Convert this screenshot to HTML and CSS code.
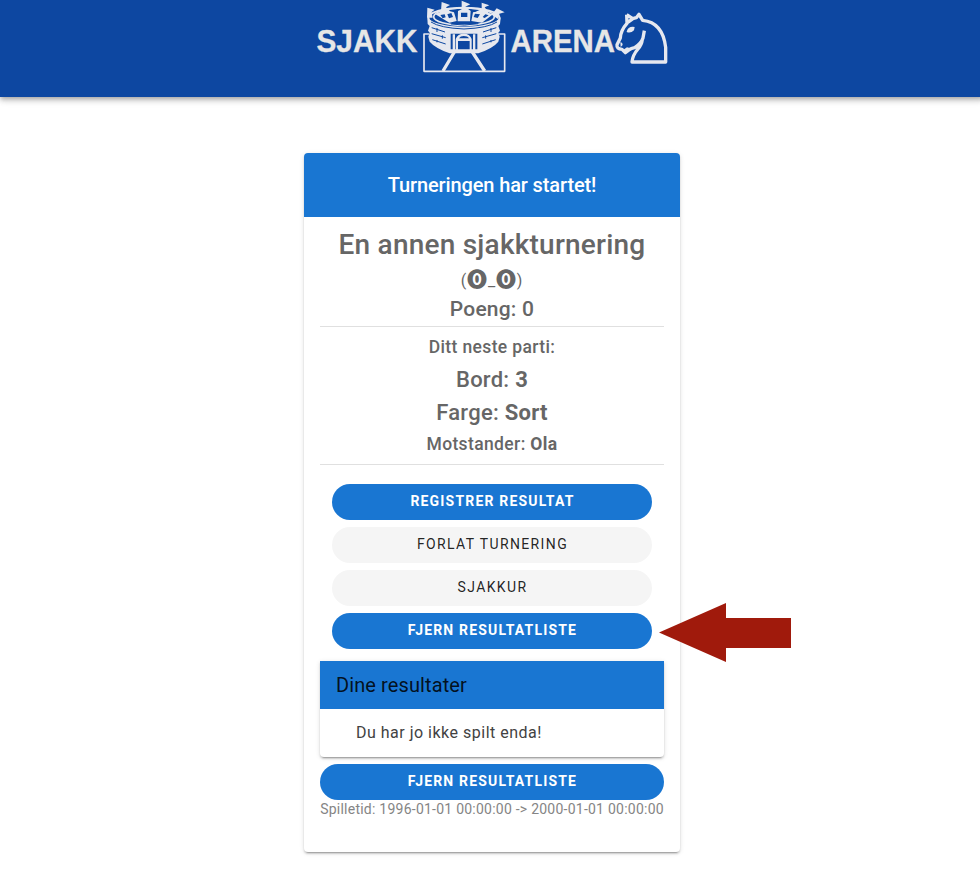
FILE: index.html
```html
<!DOCTYPE html>
<html lang="no">
<head>
<meta charset="utf-8">
<title>Sjakkarena</title>
<link rel="stylesheet" href="styles.css">
</head>
<body>
<header class="app-bar">
  <svg class="logo" viewBox="316 0 352 76" role="img" aria-label="Sjakkarena">
    <g class="logo-text">
      <text x="316.5" y="52.300" textLength="101" lengthAdjust="spacingAndGlyphs">SJAKK</text>
      <text x="510.5" y="52.300" textLength="104.500" lengthAdjust="spacingAndGlyphs">ARENA</text>
    </g>
    <g class="logo-line" transform="translate(415 0) scale(.33333)">
      <path stroke-width="5" d="M42 102H27V214H269V102H250"/>
      <path stroke-width="10" d="M118 156L84 213M172 156L209 213"/>
      <path class="logo-fill" d="M37 54Q75 84 147 84Q219 84 257 54L255 72L250 78L255 92L250 98L254 110L250 125Q235 144 190 160H104Q60 144 44 125L40 110L44 98L39 92L44 78L38 72z"/>
      <ellipse cx="147" cy="53" rx="107" ry="30" stroke-width="6" fill="#0d47a1"/>
      <ellipse cx="147" cy="50" rx="91" ry="26" stroke-width="5"/>
      <path class="logo-fill" d="M37 23L59 29L50 36L53 53H36zM80 6L105 15L93 22L107 35L77 45zM140 2L166 13L151 20L167 33L165 64H128L129 33L140 28zM200 8L223 16L209 22L220 37L195 61L179 37L200 27zM245 25L269 37L253 41L250 58L230 44zM60 42L91 30L117 37L125 63L103 68zM174 37L202 32L234 43L201 68L169 63z"/>
      <path class="logo-hole" d="M138 38H157V51H138zM97 43L109 39L114 51L102 55zM180 41L195 43L188 54L176 51zM76 45L89 43L92 52L83 55zM211 43L221 46L209 54L203 51z"/>
      <path stroke="#0d47a1" stroke-width="3" d="M48 66Q75 84 147 87Q219 84 246 66M108 72Q147 79 190 71M50 83L90 96M50 101L92 113M52 119L92 132M244 83L204 96M244 101L202 113M242 119L202 132M66 84V96M82 106V116M66 120V127M228 84V96M212 106V116M228 120V127"/>
      <path class="logo-hole" d="M107 101H187V148H168V123Q168 103 146 103Q125 103 125 123V148H107z"/>
      <path class="logo-fill" d="M113 103H120V151H113zM174 103H181V151H174zM122 117Q128 101 147 101Q164 101 170 117V157H122z"/>
      <path class="logo-hole" d="M129 123H164V148H129zM132 115Q136 108 146 108Q158 108 162 115z"/>
    </g>
    <g class="logo-line" transform="translate(610 5) scale(.33333)">
      <path stroke-width="10" d="M50 29L51 55Q32 76 31 99L21 119Q19 132 36 133L46 143L58 134Q63 130 74 128Q94 115 99 99L103 77M50 29L68 41L79 38L87 28L98 46Q158 52 167 127V171H66Q68 150 84 132Q95 120 97 104M52 53L70 40"/>
      <path class="logo-fill" d="M50 80Q54 63 74 66L72 76Q62 86 50 81zM31 112Q38 111 38 120L32 126zM51 127L62 130L47 143L39 135z"/>
    </g>
  </svg>
</header>
<main class="page">
  <section class="card">
    <h1 class="card-title">Turneringen har startet!</h1>
    <div class="card-body">
      <div class="summary">
        <h2 class="name">En annen sjakkturnering</h2>
        <p class="face">(<span class="eye">⓿</span>_<span class="eye">⓿</span>)</p>
        <p class="points">Poeng: 0</p>
      </div>
      <div class="next">
        <p class="small">Ditt neste parti:</p>
        <p class="large">Bord: <b>3</b></p>
        <p class="large">Farge: <b>Sort</b></p>
        <p class="small">Motstander: <b>Ola</b></p>
      </div>
      <div class="actions">
        <div class="action-row">
          <button class="btn primary">Registrer resultat</button>
        </div>
        <button class="btn">Forlat turnering</button>
        <button class="btn">Sjakkur</button>
        <div class="action-row">
          <button class="btn primary">Fjern resultatliste</button>
          <svg class="arrow" viewBox="0 0 134 62" aria-hidden="true"><path d="M1 30.500L68 1V16H133V46H68V60Z"/></svg>
        </div>
      </div>
      <section class="results">
        <h3 class="results-title">Dine resultater</h3>
        <p class="results-empty">Du har jo ikke spilt enda!</p>
      </section>
      <button class="btn primary">Fjern resultatliste</button>
      <p class="time">Spilletid: 1996-01-01 00:00:00 -&gt; 2000-01-01 00:00:00</p>
    </div>
  </section>
</main>
</body>
</html>
```
FILE: styles.css
```css
* { box-sizing: border-box; }
html { overflow: hidden; }
body {
  margin: 0;
  width: 984px;
  background: #fff;
  color: #666;
  font-family: Roboto, "Liberation Sans", sans-serif;
}
h1, h2, h3, p { margin: 0; }
.app-bar {
  display: flex;
  justify-content: center;
  height: 97px;
  background: #0d47a1;
  box-shadow: 0 2px 4px -1px rgba(0,0,0,.2), 0 4px 5px rgba(0,0,0,.14), 0 1px 10px rgba(0,0,0,.12);
}
.logo { width: 352px; height: 76px; }
.logo-text {
  fill: #e6e6e6;
  stroke: #e6e6e6;
  stroke-width: .3px;
  font: bold 31px "Liberation Sans", Arial, sans-serif;
}
.logo-line { fill: none; stroke: #e6e8ef; stroke-linejoin: round; }
.logo-fill { fill: #e6e8ef; stroke: none; }
.logo-hole { fill: #0d47a1; stroke: none; }
.page { display: flex; justify-content: center; padding: 56px 0 28px; }
.card {
  width: 376px;
  height: 699px;
  border-radius: 4px;
  background: #fff;
  box-shadow: 0 3px 1px -2px rgba(0,0,0,.2), 0 2px 2px rgba(0,0,0,.14), 0 1px 5px rgba(0,0,0,.12);
}
.card-title {
  height: 64px;
  border-radius: 4px 4px 0 0;
  background: #1976d2;
  color: #fff;
  font-size: 20px;
  font-weight: 500;
  line-height: 64px;
  letter-spacing: -.12px;
  text-align: center;
}
.card-body { padding: 0 16px; text-align: center; }
.summary { height: 110px; padding-top: 10px; border-bottom: 1px solid #e0e0e0; }
.name { font-size: 28px; font-weight: 500; line-height: 36px; letter-spacing: .22px; white-space: nowrap; }
.face { font-size: 16px; line-height: 36px; height: 32px; letter-spacing: .85px; }
.eye {
  font-family: "DejaVu Sans", "Noto Sans CJK JP", sans-serif;
  font-size: 20px;
  font-weight: 700;
  line-height: 1;
  vertical-align: -1px;
}
.points { font-size: 21px; font-weight: 500; line-height: 28px; letter-spacing: .2px; }
.next { height: 138px; padding-top: 4px; border-bottom: 1px solid #e0e0e0; }
.small { font-size: 17.500px; font-weight: 500; line-height: 32px; letter-spacing: .37px; }
.large { font-size: 22px; font-weight: 500; line-height: 33px; letter-spacing: .25px; }
.large + .small { line-height: 30px; }
.actions { display: flex; flex-direction: column; gap: 7px; padding: 19px 12px 12px; }
.action-row { position: relative; }
.btn {
  display: block;
  width: 100%;
  height: 36px;
  padding: 0 0 2px 1px;
  border: 0;
  border-radius: 18px;
  background: #f5f5f5;
  color: rgba(0,0,0,.87);
  font: 400 14px/34px Roboto, "Liberation Sans", sans-serif;
  letter-spacing: 1.370px;
  text-transform: uppercase;
}
.primary { background: #1976d2; color: #fff; font-weight: 700; letter-spacing: 1.180px; }
.arrow { position: absolute; left: 326px; top: -11px; width: 134px; height: 62px; fill: #a01a0c; }
.results {
  height: 96px;
  margin-bottom: 7px;
  border-radius: 0 0 4px 4px;
  text-align: left;
  box-shadow: 0 3px 1px -2px rgba(0,0,0,.2), 0 2px 2px rgba(0,0,0,.14), 0 1px 5px rgba(0,0,0,.12);
}
.results-title {
  height: 48px;
  padding-left: 16px;
  background: #1976d2;
  color: rgba(0,0,0,.87);
  font-size: 20px;
  font-weight: 400;
  line-height: 48px;
  letter-spacing: .1px;
}
.results-empty { padding-left: 36px; color: #424242; font-size: 16px; line-height: 47px; letter-spacing: .5px; }
.time { font-size: 14px; line-height: 18px; letter-spacing: .24px; color: #858585; white-space: nowrap; }
```
